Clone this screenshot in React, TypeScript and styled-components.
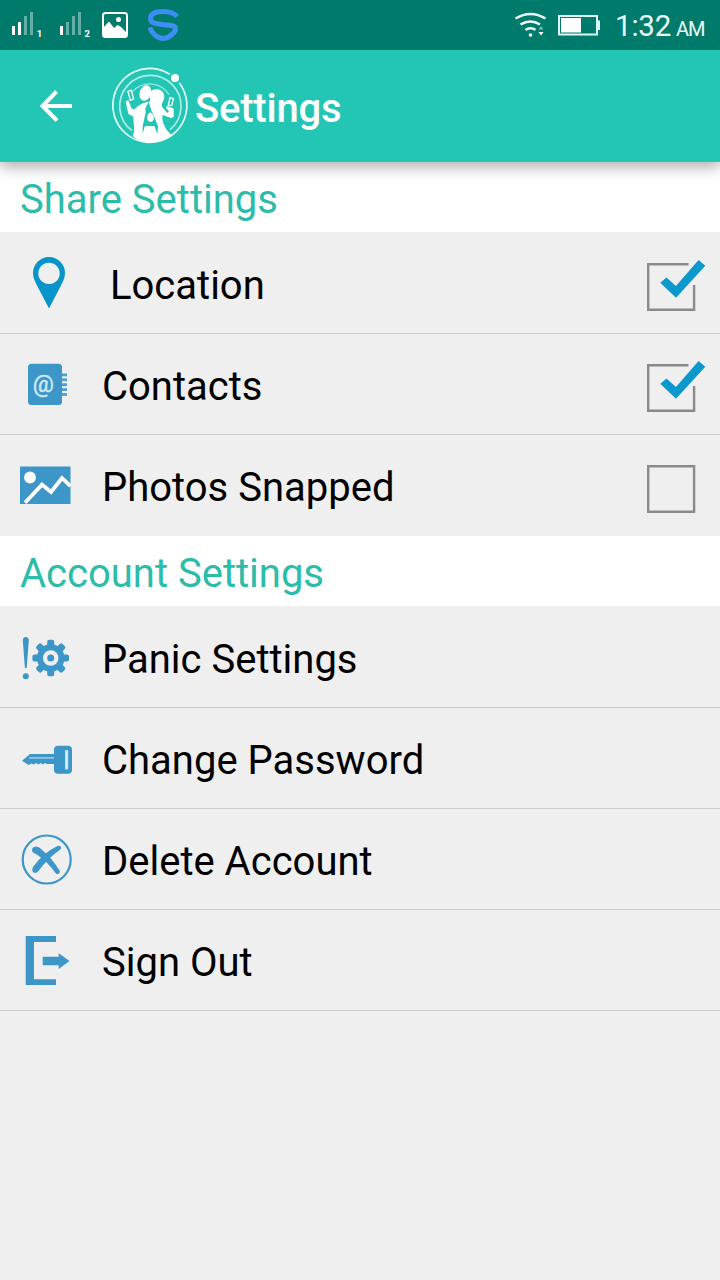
import React from 'react';
import styled, { createGlobalStyle } from 'styled-components';

const GlobalStyle = createGlobalStyle`
  body {
    margin: 0;
    background: #efefef;
    font-family: Roboto, sans-serif;
  }
`;

const blue = '#3d96c8';

const Screen = styled.div`
  width: 720px;
  height: 1280px;
  overflow: hidden;
  display: flex;
  flex-direction: column;
  background: #efefef;
`;

const StatusBar = styled.div`
  position: relative;
  z-index: 2;
  height: 50px;
  display: flex;
  justify-content: space-between;
  background: #007a6b;
  color: #e9fbf8;
`;

const StatusRight = styled.div`
  display: flex;
`;

const Clock = styled.div`
  width: 105px;
  line-height: 53px;
  font-size: 29.5px;
  letter-spacing: -0.2px;
  white-space: nowrap;
`;

const Meridiem = styled.span`
  margin-left: 5px;
  font-size: 20px;
  letter-spacing: -1.2px;
`;

const AppBar = styled.header`
  position: relative;
  z-index: 1;
  height: 112px;
  display: flex;
  background: #23c6b4;
  box-shadow: 0 5px 14px 0 rgba(0, 0, 0, 0.32);
`;

const Title = styled.h1`
  margin: 0;
  line-height: 118px;
  font-size: 40px;
  font-weight: 500;
  letter-spacing: -0.2px;
  color: #fff;
`;

const SectionTitle = styled.h2`
  margin: 0;
  height: 70px;
  padding-left: 20px;
  background: #fff;
  color: #2bbcaa;
  font-size: 40px;
  font-weight: 400;
  line-height: 75px;
`;

const List = styled.div`
  padding-top: 1px;
`;

const Row = styled.div<{ $divider: boolean }>`
  box-sizing: border-box;
  height: 101px;
  display: flex;
  border-bottom: ${(p) => (p.$divider ? '1px solid #cbcbcb' : 'none')};
`;

const Label = styled.div<{ $inset?: boolean }>`
  flex: 1;
  padding-left: ${(p) => (p.$inset ? 30 : 22)}px;
  font-size: 40px;
  line-height: 105px;
  color: #000;
`;

const Glyph = styled.svg`
  display: block;
  flex: none;
`;

const RowGlyph = ({ children }: { children: React.ReactNode }) => (
  <Glyph width="80" height="100" viewBox="0 0 80 100" fill={blue}>
    {children}
  </Glyph>
);

const PinIcon = () => (
  <RowGlyph>
    <path
      fill="#0794c8"
      fillRule="evenodd"
      d="M49 24a16 16 0 0 0-16 16c0 4 1.500 7.500 3.500 11.500L49 75.500l12.500-24C63.500 47.500 65 44 65 40a16 16 0 0 0-16-16zm0 5.700a10.700 10.700 0 1 1 0 21.400 10.700 10.700 0 0 1 0-21.400z"
    />
  </RowGlyph>
);

const ContactsIcon = () => (
  <RowGlyph>
    <rect x="28" y="29.700" width="34" height="41.300" rx="3.500" />
    {[39.5, 44.4, 49.3, 54.2, 59.1].map((y) => (
      <rect key={y} x="62" y={y} width="5" height="2.800" opacity="0.9" />
    ))}
    <text
      x="43.300"
      y="57.500"
      textAnchor="middle"
      fontFamily="Roboto, sans-serif"
      fontSize="23.500"
      fill="#cfe8f6"
      stroke="#cfe8f6"
      strokeWidth="0.500"
    >
      @
    </text>
  </RowGlyph>
);

const PhotoIcon = () => (
  <RowGlyph>
    <rect x="20" y="31.500" width="50.500" height="37.500" />
    <circle cx="30" cy="42.500" r="5.900" fill="#fff" />
    <path d="M25 67.700L42 49.600l9 7.400 11-14 8.500 8.200" fill="none" stroke="#fff" strokeWidth="3.800" />
  </RowGlyph>
);

const PanicIcon = () => (
  <RowGlyph>
    <path d="M22.800 33.500q0-3.500 3-3.500t3 3.500L26.700 61h-1.800z" />
    <circle cx="25.800" cy="69.200" r="3" />
    {[0, 45, 90, 135].map((a) => (
      <rect key={a} x="47.200" y="32.700" width="7" height="36.600" rx="2" transform={`rotate(${a} 50.700 51)`} />
    ))}
    <circle cx="50.700" cy="51" r="13.800" />
    <circle cx="50.700" cy="51" r="7.800" fill="#efefef" />
    <circle cx="50.700" cy="51" r="3.500" />
  </RowGlyph>
);

const KeyIcon = () => (
  <RowGlyph>
    <path d="M22 52.700L30 46h24v10h-7l-2-1-2 1.500-2.500-1.500-2 1.500-2.500-1.500-2 1.500-2.500-1-3 1.500z" />
    <path d="M29 49.900h25" stroke="#a5d0ea" strokeWidth="1.400" />
    <rect x="54" y="37.700" width="18" height="28" rx="4" />
    <rect x="65" y="42" width="3.200" height="19.500" rx="1" fill="#cfe8f6" />
  </RowGlyph>
);

const DeleteIcon = () => (
  <RowGlyph>
    <circle cx="46.700" cy="50.500" r="24" fill="none" stroke={blue} strokeWidth="2.200" />
    <path d="M32 41.500q0-3.500 3.500-4 3 0 5 2Q52 49 59.800 62q.5 3.500-3.500 3Q47 52 36 45q-4-1.500-4-3.500z" />
    <path d="M60.500 37.300q1.500 1.500-.5 3.500Q48 49 38.500 62q-3.500 3.500-6 .5-1-2 .5-4.500Q43 44 57 37.300q2-1 3.500 0z" />
  </RowGlyph>
);

const SignOutIcon = () => (
  <RowGlyph>
    <path d="M25.700 26H56v6H34v37.200h22V75H25.700z" />
    <path d="M42.700 46.800h16v-3.600L69.500 51l-10.800 8v-3.700h-16z" />
  </RowGlyph>
);

const Checkbox = ({ checked }: { checked: boolean }) => (
  <Glyph width="100" height="100" viewBox="0 0 100 100" role="checkbox" aria-checked={checked}>
    <path
      d={checked ? 'M68.500 31.200H28.200v45.600h45.900V52' : 'M28.200 31.200h45.900v45.600H28.200z'}
      fill="none"
      stroke="#8a8a8a"
      strokeWidth="2.400"
    />
    {checked && <path fill="#0b98cc" d="M40.300 49.800l6.200-5.300 9.400 8.400L78.600 27l6.700 5.700L56 64.800z" />}
  </Glyph>
);

const BackArrow = () => (
  <Glyph width="110" height="112" viewBox="0 0 110 112">
    <path d="M72 56H43M56.500 41.500L42.500 56l14.500 14.500" fill="none" stroke="#fff" strokeWidth="4" />
  </Glyph>
);

const Logo = () => (
  <Glyph width="85" height="112" viewBox="6 -42 255 336">
    <g fill="none" stroke="#e8fffc">
      <path d="M186 31A111 111 0 1 0 214 57" strokeWidth="5" />
      <path d="M72 200A92 92 0 1 1 186 197" strokeWidth="5" opacity="0.7" />
      <path d="M75 82A68 68 0 0 1 183 92" strokeWidth="4" opacity="0.6" />
    </g>
    <circle cx="201" cy="42" r="12" fill="#fff" />
    <g fill="#fff">
      <ellipse cx="112" cy="87" rx="17" ry="24" transform="rotate(18 112 87)" />
      <path d="M124 88C130 75 148 72 160 80C171 88 171 103 165 112C161 119 160 124 163 130L178 147L183 142L174 132L177 125L197 134L197 158L190 162L164 153C161 166 165 178 174 194C180 204 188 209 192 213Q164 236 126 236Q95 236 74 216C83 198 76 180 76 158L61 149L53 113L61 108L70 132L78 137C88 127 100 118 116 115L127 112z" />
    </g>
    <path d="M122 113L112 133L113 145L104 187L104 212L111 187H139L148 211L150 187L137 154L131 142z" fill="#23c6b4" />
    <path d="M127 145C113 153 115 173 128 174C141 172 141 153 127 145zM111 187H139L148 213H103z" fill="#fff" />
    <path d="M60 82L70 79L77 105L67 109z" fill="#23c6b4" stroke="#fff" strokeWidth="4" />
    <path d="M186 101L196 104L191 125L181 123z" fill="#23c6b4" stroke="#fff" strokeWidth="4" />
  </Glyph>
);

const NotificationIcons = () => (
  <Glyph width="200" height="50" viewBox="0 0 200 50">
    <g fill="#fff">
      <rect x="12" y="26" width="3" height="9" />
      <rect x="18" y="22" width="3" height="13" />
      <rect x="24" y="16" width="3" height="19" opacity="0.4" />
      <rect x="30" y="12" width="3" height="23" opacity="0.4" />
      <rect x="60" y="26" width="3" height="9" />
      <rect x="66" y="22" width="3" height="13" opacity="0.4" />
      <rect x="72" y="16" width="3" height="19" opacity="0.4" />
      <rect x="78" y="12" width="3" height="23" opacity="0.4" />
    </g>
    <g fill="#fff" fontFamily="Roboto, sans-serif" fontSize="9.500" fontWeight="700">
      <text x="36.800" y="37">1</text>
      <text x="84.500" y="37">2</text>
    </g>
    <rect x="103" y="13" width="24" height="24" rx="2.500" fill="none" stroke="#fff" strokeWidth="2" />
    <path d="M103 28l6-6.500 5 6.500 3.500-3 3.500 2 6 6v4h-24z" fill="#fff" />
    <circle cx="118.500" cy="19.500" r="2.500" fill="#fff" />
    <path
      d="M177 16.500C174 12.500 169 11.500 163 11.500C155 11.500 150.500 13.500 150.500 18.500C150.500 23 154 23.500 162 24.500C171 25.500 175.500 25.500 175.500 28.500C175.500 33 168 38.500 163 38.500C158 38.500 151.500 33.500 150 27.500"
      fill="none"
      stroke="#3e8df3"
      strokeWidth="5"
    />
  </Glyph>
);

const ConnectivityIcons = () => (
  <Glyph width="105" height="50" viewBox="510 0 105 50">
    <g fill="none" stroke="#eefffd" strokeWidth="2.600">
      <path d="M515.500 18.500q15-9 30 0" />
      <path d="M520.500 24.500q10-6 19.500 0" />
      <path d="M525.500 29.800q5-3 10 0" />
    </g>
    <circle cx="530.500" cy="35" r="1.800" fill="#fff" />
    <path d="M538.500 29.500l2.500-3.500 2.500 3.500z" fill="#fff" opacity="0.5" />
    <path d="M538.500 32l2.500 3.500 2.500-3.500z" fill="#fff" />
    <rect x="559" y="16" width="38" height="18.500" fill="none" stroke="#dffaf6" strokeWidth="2" />
    <rect x="561" y="18" width="20" height="14.500" fill="#fff" />
    <rect x="598" y="20.500" width="2" height="9.500" fill="#dffaf6" />
  </Glyph>
);

type Item = {
  label: string;
  Icon: React.ComponentType;
  checked?: boolean;
  inset?: boolean;
};

type SectionData = { title: string; items: Item[]; closed: boolean };

const sections: SectionData[] = [
  {
    title: 'Share Settings',
    closed: false,
    items: [
      { label: 'Location', Icon: PinIcon, checked: true, inset: true },
      { label: 'Contacts', Icon: ContactsIcon, checked: true },
      { label: 'Photos Snapped', Icon: PhotoIcon, checked: false },
    ],
  },
  {
    title: 'Account Settings',
    closed: true,
    items: [
      { label: 'Panic Settings', Icon: PanicIcon },
      { label: 'Change Password', Icon: KeyIcon },
      { label: 'Delete Account', Icon: DeleteIcon },
      { label: 'Sign Out', Icon: SignOutIcon },
    ],
  },
];

export default function App() {
  return (
    <Screen>
      <GlobalStyle />
      <StatusBar>
        <NotificationIcons />
        <StatusRight>
          <ConnectivityIcons />
          <Clock>
            1:32<Meridiem>AM</Meridiem>
          </Clock>
        </StatusRight>
      </StatusBar>
      <AppBar>
        <BackArrow />
        <Logo />
        <Title>Settings</Title>
      </AppBar>
      {sections.map(({ title, items, closed }) => (
        <section key={title}>
          <SectionTitle>{title}</SectionTitle>
          <List>
            {items.map(({ label, Icon, checked, inset }, i) => (
              <Row key={label} $divider={closed || i < items.length - 1}>
                <Icon />
                <Label $inset={inset}>{label}</Label>
                {checked !== undefined && <Checkbox checked={checked} />}
              </Row>
            ))}
          </List>
        </section>
      ))}
    </Screen>
  );
}
